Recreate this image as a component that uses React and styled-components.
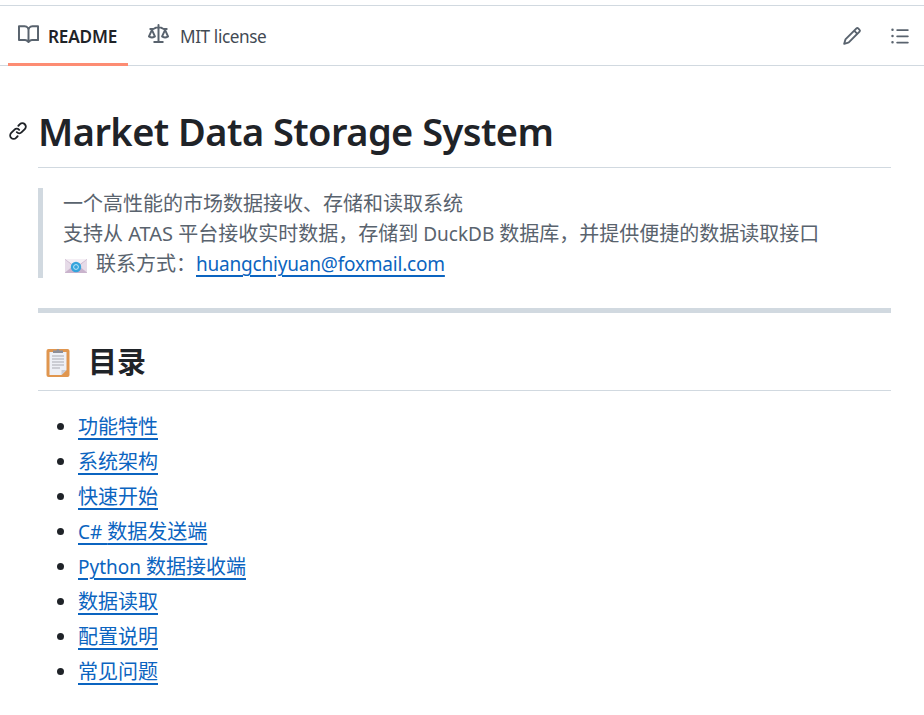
import React from "react";
import styled, { createGlobalStyle } from "styled-components";

const Global = createGlobalStyle`
  html, body { margin: 0; padding: 0; background: #fff; }
  body { font-family: "Noto Sans", "Noto Sans CJK SC", sans-serif; color: #1f2328; width: 924px; height: 715px; overflow: hidden; }
`;
const Page = styled.div`padding-top: 5px; width: 924px;`;
const Nav = styled.nav`
  display: flex; justify-content: space-between; align-items: stretch;
  height: 59px; border-top: 1px solid #d1d9e0; border-bottom: 1px solid #d1d9e0; padding: 0 8px;
`;
const Tabs = styled.div`display: flex; gap: 10px;`;
const Tab = styled.div`
  display: flex; align-items: center; gap: 10px; height: 60px; box-sizing: border-box; padding: 0 10px; width: ${p => p.$w}px;
  font-size: 17.2px; color: ${p => p.$active ? "#1f2328" : "#424a53"}; font-weight: ${p => p.$active ? 600 : 400};
  border-bottom: 3px solid ${p => p.$active ? "#fd8c73" : "transparent"};
  letter-spacing: ${p => p.$active ? -0.2 : -0.4}px;
`;
const TabLabel = styled.span`position: relative; top: 2px; left: ${p => p.$left || 0}px;`;
const Tools = styled.div`display: flex; align-items: center; gap: 28px; padding-right: 6px;`;
const Icon = styled.svg`width: ${p => p.$s || 20}px; height: ${p => p.$s || 20}px; fill: currentColor; flex: none; color: #59636e;`;
const Body = styled.article`padding: 0 33px 0 38px;`;
const H1 = styled.h1`
  position: relative; margin: 42px 0 0; font-size: 38px; line-height: 46px; font-weight: 600; color: #1f2328;
  letter-spacing: -0.55px; padding-bottom: 13px; border-bottom: 1px solid #d1d9e0;
`;
const Anchor = styled.span`position: absolute; left: -30px; top: 13px; color: #1f2328; display: flex;`;
const Quote = styled.blockquote`
  box-sizing: border-box; height: 90px; margin: 20px 0 0; padding: 1px 0 0 20px; border-left: 5px solid #d1d9e0;
  color: #59636e; font-size: 20px; line-height: 30px;
`;
const Lat = styled.span`font-size: ${p => p.$s || 19}px;`;
const MailLink = styled.a`
  color: #0b64c0; text-decoration: underline; text-decoration-thickness: 2px; text-underline-offset: 4px;
  font-size: 19px; letter-spacing: -0.2px;
`;
const Rule = styled.hr`margin: 30px 0 0; height: 5px; border: 0; background: #d1d9e0;`;
const H2 = styled.h2`
  display: flex; align-items: center; gap: 18px; margin: 30px 0 0; font-size: 29px; line-height: 38px; font-weight: 700;
  padding: 0 0 9px 8px; border-bottom: 1px solid #d1d9e0; color: #1f2328;
`;
const List = styled.ul`margin: 18px 0 0; padding: 0 0 0 40px; font-size: 20px; line-height: 35px;`;
const Item = styled.li`height: 35px;`;
const ItemLink = styled.a`
  color: #0b64c0; text-decoration: underline; text-decoration-thickness: 2px; text-underline-offset: 4px;
`;

const Book = () => <Icon viewBox="0 0 16 16" $s={21}><path d="M0 1.75A.75.75 0 0 1 .75 1h4.253c1.227 0 2.317.59 3 1.501A3.743 3.743 0 0 1 11.006 1h4.245a.75.75 0 0 1 .75.75v10.5a.75.75 0 0 1-.75.75h-4.507a2.25 2.25 0 0 0-1.591.659l-.622.621a.75.75 0 0 1-1.06 0l-.622-.621A2.25 2.25 0 0 0 5.258 13H.75a.75.75 0 0 1-.75-.75Zm7.251 10.324.004-5.073-.002-2.253A2.25 2.25 0 0 0 5.003 2.5H1.5v9h3.757a3.75 3.75 0 0 1 1.994.574ZM8.755 4.75l-.004 7.322a3.752 3.752 0 0 1 1.992-.572H14.5v-9h-3.495a2.25 2.25 0 0 0-2.25 2.25Z"/></Icon>;
const Law = () => <Icon viewBox="0 0 16 16" $s={21}><path d="M8.75.75V2h.985c.304 0 .603.08.867.231l1.29.736c.038.022.08.033.124.033h2.234a.75.75 0 0 1 0 1.5h-.427l2.111 4.692a.75.75 0 0 1-.154.838l-.53-.53.529.531-.001.002-.002.002-.006.006-.006.005-.01.01-.045.04c-.21.176-.441.327-.686.45C14.556 10.78 13.88 11 13 11a4.498 4.498 0 0 1-2.023-.454 3.544 3.544 0 0 1-.686-.45l-.045-.04-.016-.015-.006-.006-.004-.004v-.001a.75.75 0 0 1-.154-.838L12.178 4.5h-.162c-.305 0-.604-.079-.868-.231l-1.29-.736a.245.245 0 0 0-.124-.033H8.75V13h2.5a.75.75 0 0 1 0 1.5h-6.5a.75.75 0 0 1 0-1.5h2.5V3.5h-.984a.245.245 0 0 0-.124.033l-1.289.737c-.265.15-.564.23-.869.23h-.162l2.112 4.692a.75.75 0 0 1-.154.838l-.53-.53.529.531-.001.002-.002.002-.006.006-.016.015-.045.04c-.21.176-.441.327-.686.45C4.556 10.78 3.88 11 3 11a4.498 4.498 0 0 1-2.023-.454 3.544 3.544 0 0 1-.686-.45l-.045-.04-.016-.015-.006-.006-.004-.004v-.001a.75.75 0 0 1-.154-.838L2.178 4.5H1.75a.75.75 0 0 1 0-1.5h2.234a.249.249 0 0 0 .125-.033l1.288-.737c.265-.15.564-.23.869-.23h.984V.75a.75.75 0 0 1 1.5 0Zm2.945 8.477c.285.135.718.273 1.305.273s1.02-.138 1.305-.273L13 6.327Zm-10 0c.285.135.718.273 1.305.273s1.02-.138 1.305-.273L3 6.327Z"/></Icon>;
const Pencil = () => <Icon viewBox="0 0 16 16" $s={20}><path d="M11.013 1.427a1.75 1.75 0 0 1 2.474 0l1.086 1.086a1.75 1.75 0 0 1 0 2.474l-8.61 8.61c-.21.21-.47.364-.756.445l-3.251.93a.75.75 0 0 1-.927-.928l.929-3.25c.081-.286.235-.547.445-.758l8.61-8.61Zm.176 4.823L9.75 4.81l-6.286 6.287a.253.253 0 0 0-.064.108l-.558 1.953 1.953-.558a.253.253 0 0 0 .108-.064Zm1.238-3.763a.25.25 0 0 0-.354 0L10.811 3.75l1.439 1.44 1.263-1.263a.25.25 0 0 0 0-.354Z"/></Icon>;
const ListIcon = () => <Icon viewBox="0 0 16 16" $s={20}><path d="M5.75 2.5h8.5a.75.75 0 0 1 0 1.5h-8.5a.75.75 0 0 1 0-1.5Zm0 5h8.5a.75.75 0 0 1 0 1.5h-8.5a.75.75 0 0 1 0-1.5Zm0 5h8.5a.75.75 0 0 1 0 1.5h-8.5a.75.75 0 0 1 0-1.5ZM2 14a1 1 0 1 1 0-2 1 1 0 0 1 0 2Zm1-6a1 1 0 1 1-2 0 1 1 0 0 1 2 0ZM2 4a1 1 0 1 1 0-2 1 1 0 0 1 0 2Z"/></Icon>;
const LinkIcon = () => <svg viewBox="0 0 16 16" width="20" height="20" fill="currentColor"><path d="m7.775 3.275 1.25-1.25a3.5 3.5 0 1 1 4.95 4.95l-2.5 2.5a3.5 3.5 0 0 1-4.95 0 .751.751 0 0 1 .018-1.042.751.751 0 0 1 1.042-.018 1.998 1.998 0 0 0 2.83 0l2.5-2.5a2.002 2.002 0 0 0-2.83-2.83l-1.25 1.25a.751.751 0 0 1-1.042-.018.751.751 0 0 1-.018-1.042Zm-4.69 9.64a1.998 1.998 0 0 0 2.83 0l1.25-1.25a.751.751 0 0 1 1.042.018.751.751 0 0 1 .018 1.042l-1.25 1.25a3.5 3.5 0 1 1-4.95-4.95l2.5-2.5a3.5 3.5 0 0 1 4.95 0 .751.751 0 0 1-.018 1.042.751.751 0 0 1-1.042.018 1.998 1.998 0 0 0-2.83 0l-2.5 2.5a1.998 1.998 0 0 0 0 2.83Z"/></svg>;

const MailGlyph = styled.svg`width: 24px; height: 16px; vertical-align: -3px; margin: 0 8px 0 1px;`;
const Mail = () => (
  <MailGlyph viewBox="0 0 24 16">
    <rect x="1" y="1" width="22" height="14" fill="#c9b3cc"/>
    <path d="M1 1h22L12 9z" fill="#f4eef4"/>
    <path d="M1 1.5l0 13 8-6.5z M23 1.5l0 13-8-6.5z" fill="#e6dbe8"/>
    <circle cx="12" cy="9" r="5.2" fill="#35a4dc"/>
    <circle cx="12" cy="9" r="2.4" fill="none" stroke="#cdeefc" strokeWidth=".9"/>
  </MailGlyph>
);
const Clip = () => (
  <svg viewBox="0 0 24 30" width="24" height="30">
    <rect x="0.5" y="2" width="23" height="28" rx="2" fill="#e0964f"/>
    <path d="M3.5 5h17v18l-5 5h-12z" fill="#eef0f6"/>
    <path d="M20.5 23h-5v5z" fill="#c9ccd6"/>
    <path d="M6 9h12M6 12h12M6 15h12M6 18h12M6 21h8" stroke="#a9aab2" strokeWidth="1"/>
    <path d="M7 6V3.5h3.5C11 1.5 13 1.5 13.5 3.5H17V6z" fill="#8d8f99"/>
  </svg>
);

const toc = [
  [null, "功能特性"], [null, "系统架构"], [null, "快速开始"], ["C# ", "数据发送端"],
  ["Python ", "数据接收端"], [null, "数据读取"], [null, "配置说明"], [null, "常见问题"],
];

export default function App() {
  return (
    <Page>
      <Global />
      <Nav>
        <Tabs>
          <Tab $active $w={120}><Book /><TabLabel $left={-1}>README</TabLabel></Tab>
          <Tab><Law /><TabLabel $left={1}>MIT license</TabLabel></Tab>
        </Tabs>
        <Tools><Pencil /><ListIcon /></Tools>
      </Nav>
      <Body>
        <H1><Anchor><LinkIcon /></Anchor>Market Data Storage System</H1>
        <Quote>
          一个高性能的市场数据接收、存储和读取系统<br />
          支持从<Lat $s={20}> ATAS </Lat>平台接收实时数据，存储到<Lat $s={19}> DuckDB </Lat>数据库，并提供便捷的数据读取接口<br />
          <Mail />联系方式：<MailLink>huangchiyuan@foxmail.com</MailLink>
        </Quote>
        <Rule />
        <H2><Clip />目录</H2>
        <List>
          {toc.map(([lat, cjk]) => (
            <Item key={cjk}><ItemLink>{lat && <Lat $s={19}>{lat}</Lat>}{cjk}</ItemLink></Item>
          ))}
        </List>
      </Body>
    </Page>
  );
}
